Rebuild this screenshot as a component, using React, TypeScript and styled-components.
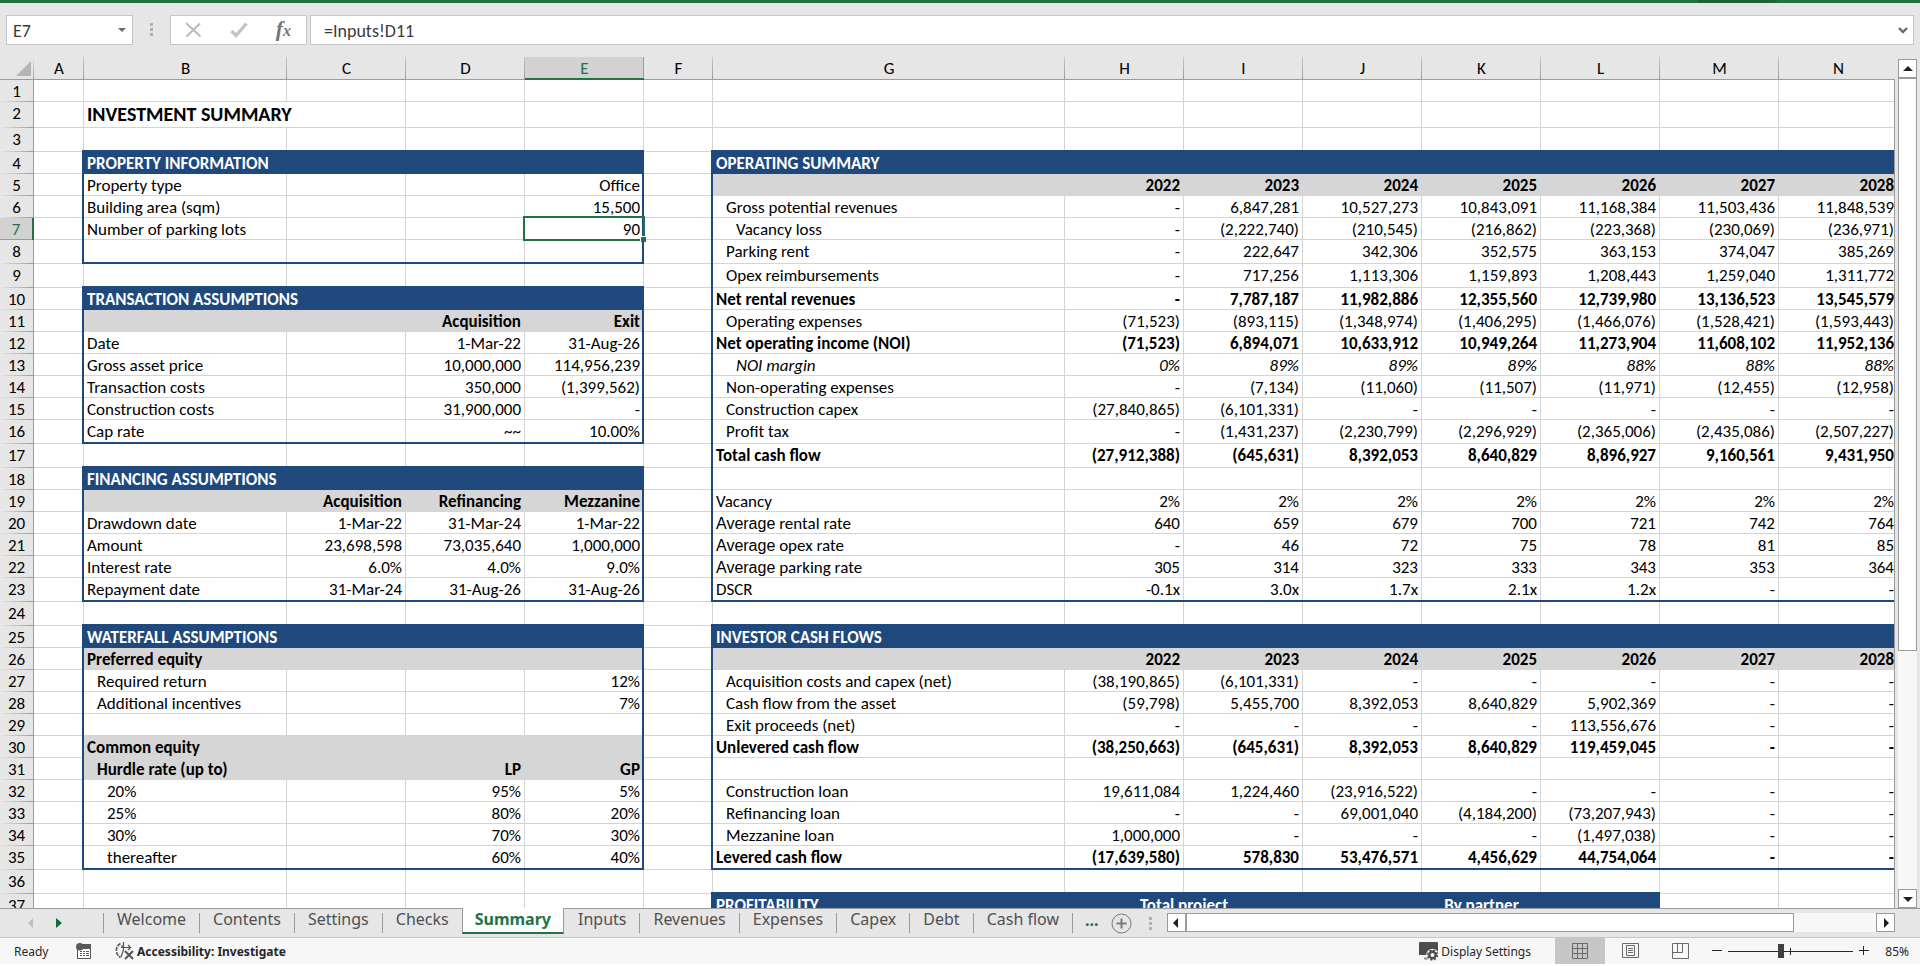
import React from 'react';
import styled, { createGlobalStyle, css } from 'styled-components';

const SHEET_FONT = '"Calibri", "Carlito", "Lato", sans-serif';
const UI_FONT = '"Segoe UI", "Noto Sans", "Open Sans", sans-serif';

const C = {
  green: '#217346',
  chrome: '#e6e6e6',
  navy: '#1f497d',
  band: '#d6d6d6',
  grid: '#d4d4d4',
  edge: '#9b9b9b',
  line: '#c6c6c6',
  status: '#f7f7f7',
};

const GlobalStyle = createGlobalStyle`
  *, *::before, *::after { box-sizing: border-box; }
  body { margin: 0; background: #fff; font-family: ${SHEET_FONT}; color: #000; }
  button, input { font: inherit; color: inherit; margin: 0; padding: 0; border: 0; background: none; }
`;

/* ---------- page ---------- */

const Page = styled.div`
  display: flex;
  flex-direction: column;
  height: 100vh;
  overflow: hidden;
  padding-bottom: 2px;
`;

const TitleEdge = styled.div`
  display: flex;
  justify-content: flex-end;
  height: 3px;
  flex: none;
  padding-right: 142px;
  background: ${C.green};
`;

const TitleShade = styled.span`
  width: 82px;
  background: #1e6038;
  clip-path: polygon(0 0, 100% 0, 96% 100%, 4% 100%);
`;

/* ---------- formula bar ---------- */

const FormulaBar = styled.div`
  display: flex;
  align-items: flex-start;
  flex: none;
  height: 54px;
  padding: 12px 6px;
  background: ${C.chrome};
  font-size: 18px;
  color: #3b3b3b;
`;

const BarBox = styled.div`
  display: flex;
  align-items: center;
  height: 30px;
  background: #fff;
  border: 1px solid ${C.line};
`;

const NameBox = styled(BarBox)`
  width: 127px;
  padding: 0 6px;
`;

const NameInput = styled.input`
  flex: 1;
  min-width: 0;
  padding-top: 2px;
  outline: none;
`;

const IconButton = styled.button`
  display: flex;
  align-items: center;
  justify-content: center;
  flex: none;
`;

const Dots = styled.span<{ $gapLeft: number; $gapRight: number }>`
  display: flex;
  flex-direction: column;
  justify-content: center;
  gap: 2px;
  height: 29px;
  margin: 0 ${p => p.$gapRight}px 0 ${p => p.$gapLeft}px;

  i {
    width: 3px;
    height: 3px;
    background: #b0b0b0;
  }
`;

const FormulaButtons = styled(BarBox)`
  justify-content: space-between;
  width: 137px;
  margin-right: 3px;
  padding: 0 15px 0 14px;
`;

const FxLabel = styled.span`
  font: italic 700 22px/26px "Liberation Serif", serif;
  color: #757575;

  small {
    font-size: 16px;
  }
`;

const FormulaField = styled(BarBox)`
  flex: 1;
  padding: 0 5px 0 13px;
`;

/* ---------- sheet ---------- */

const SheetArea = styled.main`
  display: flex;
  flex: 1;
  min-height: 0;
  background: ${C.chrome};
`;

const SheetPane = styled.div`
  flex: 1;
  min-width: 0;
  overflow: hidden;
  background: linear-gradient(${C.chrome} 23px, #fff 23px);
`;

const Table = styled.table`
  table-layout: fixed;
  width: 100%;
  min-width: 1898px;
  border-collapse: separate;
  border-spacing: 0;
  font-size: 17px;
  line-height: 18px;
`;

const Col = styled.col<{ $w?: number }>`
  ${p => p.$w && `width: ${p.$w}px;`}
`;

const Corner = styled.th`
  height: 23px;
  padding: 0;
  background: linear-gradient(${C.chrome}, ${C.edge}) right / 1px 100% no-repeat ${C.chrome};
  border-bottom: 1px solid ${C.edge};
`;

const CornerMark = styled.svg`
  display: block;
  margin: 0 3px 0 auto;
`;

const ColumnHead = styled.th<{ $on?: boolean }>`
  height: 23px;
  padding: 1px 0 0;
  font-weight: 400;
  background: linear-gradient(${C.line}, ${C.edge}) right / 1px 100% no-repeat ${C.chrome};
  border-bottom: 1px solid ${C.edge};

  &:last-child {
    background: ${C.chrome};
  }

  ${p => p.$on && css`
    padding-top: 2px;
    color: ${C.green};
    background: linear-gradient(${C.edge}, ${C.edge}) right / 1px 100% no-repeat #d2d2d2;
    border-bottom: 2px solid ${C.green};
  `}
`;

const RowHead = styled.th<{ $on?: boolean }>`
  padding: 3px 0 0;
  vertical-align: top;
  font-weight: 400;
  text-align: center;
  background: linear-gradient(90deg, ${C.chrome}, ${C.edge}) bottom / 100% 1px no-repeat ${C.chrome};
  border-right: 1px solid ${C.edge};

  ${p => p.$on && css`
    color: ${C.green};
    background: linear-gradient(${C.edge}, ${C.edge}) bottom / 100% 1px no-repeat #d2d2d2;
    border-right: 2px solid ${C.green};
  `}
`;

const Row = styled.tr<{ $h: number }>`
  height: ${p => p.$h}px;
`;

type Edge = 'grid' | 'navy' | 'band';

const layer = (color: string, place: string) => `linear-gradient(${color}, ${color}) ${place} no-repeat`;
const thickness = (e: Edge) => (e === 'navy' ? 2 : 1);

const Cell = styled.td<{
  $right: Edge;
  $bottom: Edge;
  $corner?: boolean;
  $band?: boolean;
  $bold?: boolean;
  $italic?: boolean;
  $indent?: number;
  $label?: boolean;
}>`
  position: relative;
  padding: 3px 4px 0 ${p => 3 + (p.$indent || 0) * 10}px;
  vertical-align: top;
  white-space: nowrap;
  text-align: ${p => (p.$label ? 'left' : 'right')};
  font-weight: ${p => (p.$bold ? 700 : 400)};
  font-style: ${p => (p.$italic ? 'italic' : 'normal')};
  background:
    ${p => p.$corner && `${layer(C.navy, 'right bottom / 2px 2px')},`}
    ${p => p.$right === 'navy' && `${layer(C.navy, 'right / 2px 100%')},`}
    ${p => layer(C[p.$bottom], `bottom / 100% ${thickness(p.$bottom)}px`)},
    ${p => layer(C[p.$right], `right / ${thickness(p.$right)}px 100%`)},
    ${p => (p.$band ? C.band : '#fff')};
`;

const BarCell = styled.th<{ $center?: boolean }>`
  padding: 3px 3px 0;
  vertical-align: top;
  text-align: ${p => (p.$center ? 'center' : 'left')};
  color: #fff;
  background: ${C.navy};
`;

const TitleCell = styled.td`
  padding: 1px 3px 0;
  vertical-align: top;
  font-size: 20px;
  line-height: 22px;
  font-weight: 700;
  border-right: 1px solid ${C.grid};
  border-bottom: 1px solid ${C.grid};
`;

const ArialWord = styled.span`
  font-family: Arial, "Liberation Sans", sans-serif;
  font-size: 16px;
`;

const Selection = styled.span`
  position: absolute;
  z-index: 1;
  inset: -2px -1px -1px -2px;
  border: 2px solid ${C.green};
  pointer-events: none;

  &::after {
    content: '';
    position: absolute;
    right: -3px;
    bottom: -3px;
    width: 6px;
    height: 6px;
    background: ${C.green};
    border: solid #fff;
    border-width: 1px 0 0 1px;
  }
`;

/* ---------- scroll bars ---------- */

const Gutter = styled.div`
  display: flex;
  flex: none;
  padding-right: 3px;
`;

const GutterLine = styled.div`
  width: 1px;
  margin: 22px 3px 0 0;
  background: ${C.edge};
`;

const VScroll = styled.div`
  display: flex;
  flex-direction: column;
  width: 19px;
  padding-top: 2px;
`;

const ScrollButton = styled(IconButton)`
  width: 19px;
  height: 19px;
  background: #fff;
  border: 1px solid ${C.edge};
`;

const Thumb = styled.div<{ $share: number }>`
  flex: ${p => p.$share};
  background: #fff;
  border: 1px solid ${C.edge};
`;

const Track = styled.div<{ $share: number }>`
  flex: ${p => p.$share};
  background: ${C.status};
`;

/* ---------- tab strip ---------- */

const TabStrip = styled.nav`
  display: flex;
  flex: none;
  height: 30px;
  padding-right: 25px;
  background: ${C.chrome};
  border-top: 1px solid ${C.edge};
  border-bottom: 1px solid ${C.line};
  font-family: ${UI_FONT};
  font-size: 16px;
  color: #505050;
`;

const TabArrows = styled.div`
  display: flex;
  gap: 23px;
  width: 103px;
  height: 28px;
  padding-left: 28px;
`;

const Tab = styled.button<{ $on?: boolean; $bare?: boolean }>`
  flex: none;
  height: 20px;
  margin-top: 4px;
  padding: 0 13px;
  line-height: 20px;
  border-left: 1px solid ${p => (p.$bare ? 'transparent' : C.edge)};

  span {
    display: block;
    margin-top: -8px;
  }

  ${p => p.$on && css`
    height: 26px;
    margin-top: -1px;
    padding: 0 12px 2px;
    font-weight: 700;
    color: ${C.green};
    background: #fff;
    border-right: 1px solid ${C.edge};
    border-bottom: 2px solid ${C.green};

    span { margin-top: 0; }
  `}
`;

const MoreTabs = styled.button`
  height: 22px;
  padding: 0 12px;
  font-weight: 700;
  line-height: 20px;
  color: ${C.green};
`;

const TabsEnd = styled.div`
  height: 20px;
  margin-top: 4px;
  border-left: 1px solid ${C.edge};
`;

const AddSheet = styled(IconButton)`
  height: 28px;
`;

const HScroll = styled.div`
  display: flex;
  flex: 1;
  height: 19px;
  margin-top: 4px;
`;

/* ---------- status bar ---------- */

const StatusBar = styled.footer`
  display: flex;
  align-items: center;
  flex: none;
  height: 26px;
  padding: 0 11px 0 14px;
  background: ${C.status};
  font-family: ${UI_FONT};
  font-size: 12px;
  color: #262626;
`;

const StatusText = styled.span<{ $w: number }>`
  min-width: ${p => p.$w}px;
`;

const StatusButton = styled(IconButton)<{ $bold?: boolean }>`
  gap: 2px;
  font-weight: ${p => (p.$bold ? 700 : 400)};
`;

const MacroButton = styled(StatusButton)`
  margin-right: 23px;
`;

const StatusRight = styled.div`
  display: flex;
  align-items: center;
  height: 100%;
  margin-left: auto;
`;

const ViewButton = styled(IconButton)<{ $on?: boolean }>`
  width: 50px;
  height: 100%;
  background: ${p => (p.$on ? '#c6c6c6' : 'transparent')};
`;

const ViewGroup = styled.div`
  display: flex;
  height: 100%;
  margin: 0 7px 0 24px;
`;

const ZoomSlider = styled.input`
  appearance: none;
  width: 125px;
  height: 14px;
  margin: 0 6px;
  background:
    linear-gradient(#262626, #262626) 62px 50% / 1px 7px no-repeat,
    linear-gradient(#262626, #262626) 0 50% / 100% 1px no-repeat;

  &::-webkit-slider-thumb {
    appearance: none;
    width: 6px;
    height: 14px;
    background: #404040;
  }
`;

const ZoomValue = styled.button`
  width: 40px;
  text-align: right;
`;

/* ---------- data ---------- */

type Kind = 'bar' | 'band' | 'body';
interface Block {
  k: Kind;
  t?: string;
  v?: string[];
  indent?: number;
  bold?: boolean;
  italic?: boolean;
  end?: boolean;
}
interface SheetRow { h: number; l?: Block; r?: Block }

const blanks = ['', '', '', '', '', '', ''];
const years = ['2022', '2023', '2024', '2025', '2026', '2027', '2028'];

const ROWS: SheetRow[] = [
  { h: 22 },
  { h: 26 },
  { h: 24 },
  { h: 22, l: { k: 'bar', t: 'PROPERTY INFORMATION' }, r: { k: 'bar', t: 'OPERATING SUMMARY' } },
  { h: 22, l: { k: 'body', t: 'Property type', v: ['', '', 'Office'] }, r: { k: 'band', v: years } },
  { h: 22, l: { k: 'body', t: 'Building area (sqm)', v: ['', '', '15,500'] }, r: { k: 'body', indent: 1, t: 'Gross potential revenues', v: ['-', '6,847,281', '10,527,273', '10,843,091', '11,168,384', '11,503,436', '11,848,539'] } },
  { h: 22, l: { k: 'body', t: 'Number of parking lots', v: ['', '', '90'] }, r: { k: 'body', indent: 2, t: 'Vacancy loss', v: ['-', '(2,222,740)', '(210,545)', '(216,862)', '(223,368)', '(230,069)', '(236,971)'] } },
  { h: 24, l: { k: 'body', end: true }, r: { k: 'body', indent: 1, t: 'Parking rent', v: ['-', '222,647', '342,306', '352,575', '363,153', '374,047', '385,269'] } },
  { h: 24, r: { k: 'body', indent: 1, t: 'Opex reimbursements', v: ['-', '717,256', '1,113,306', '1,159,893', '1,208,443', '1,259,040', '1,311,772'] } },
  { h: 22, l: { k: 'bar', t: 'TRANSACTION ASSUMPTIONS' }, r: { k: 'body', bold: true, t: 'Net rental revenues', v: ['-', '7,787,187', '11,982,886', '12,355,560', '12,739,980', '13,136,523', '13,545,579'] } },
  { h: 22, l: { k: 'band', v: ['', 'Acquisition', 'Exit'] }, r: { k: 'body', indent: 1, t: 'Operating expenses', v: ['(71,523)', '(893,115)', '(1,348,974)', '(1,406,295)', '(1,466,076)', '(1,528,421)', '(1,593,443)'] } },
  { h: 22, l: { k: 'body', t: 'Date', v: ['', '1-Mar-22', '31-Aug-26'] }, r: { k: 'body', bold: true, t: 'Net operating income (NOI)', v: ['(71,523)', '6,894,071', '10,633,912', '10,949,264', '11,273,904', '11,608,102', '11,952,136'] } },
  { h: 22, l: { k: 'body', t: 'Gross asset price', v: ['', '10,000,000', '114,956,239'] }, r: { k: 'body', indent: 2, italic: true, t: 'NOI margin', v: ['0%', '89%', '89%', '89%', '88%', '88%', '88%'] } },
  { h: 22, l: { k: 'body', t: 'Transaction costs', v: ['', '350,000', '(1,399,562)'] }, r: { k: 'body', indent: 1, t: 'Non-operating expenses', v: ['-', '(7,134)', '(11,060)', '(11,507)', '(11,971)', '(12,455)', '(12,958)'] } },
  { h: 22, l: { k: 'body', t: 'Construction costs', v: ['', '31,900,000', '-'] }, r: { k: 'body', indent: 1, t: 'Construction capex', v: ['(27,840,865)', '(6,101,331)', '-', '-', '-', '-', '-'] } },
  { h: 24, l: { k: 'body', end: true, t: 'Cap rate', v: ['', '~~', '10.00%'] }, r: { k: 'body', indent: 1, t: 'Profit tax', v: ['-', '(1,431,237)', '(2,230,799)', '(2,296,929)', '(2,365,006)', '(2,435,086)', '(2,507,227)'] } },
  { h: 24, r: { k: 'body', bold: true, t: 'Total cash flow', v: ['(27,912,388)', '(645,631)', '8,392,053', '8,640,829', '8,896,927', '9,160,561', '9,431,950'] } },
  { h: 22, l: { k: 'bar', t: 'FINANCING ASSUMPTIONS' }, r: { k: 'body' } },
  { h: 22, l: { k: 'band', v: ['Acquisition', 'Refinancing', 'Mezzanine'] }, r: { k: 'body', t: 'Vacancy', v: ['2%', '2%', '2%', '2%', '2%', '2%', '2%'] } },
  { h: 22, l: { k: 'body', t: 'Drawdown date', v: ['1-Mar-22', '31-Mar-24', '1-Mar-22'] }, r: { k: 'body', t: 'Average rental rate', v: ['640', '659', '679', '700', '721', '742', '764'] } },
  { h: 22, l: { k: 'body', t: 'Amount', v: ['23,698,598', '73,035,640', '1,000,000'] }, r: { k: 'body', t: 'Average opex rate', v: ['-', '46', '72', '75', '78', '81', '85'] } },
  { h: 22, l: { k: 'body', t: 'Interest rate', v: ['6.0%', '4.0%', '9.0%'] }, r: { k: 'body', t: 'Average parking rate', v: ['305', '314', '323', '333', '343', '353', '364'] } },
  { h: 24, l: { k: 'body', end: true, t: 'Repayment date', v: ['31-Mar-24', '31-Aug-26', '31-Aug-26'] }, r: { k: 'body', end: true, t: 'DSCR', v: ['-0.1x', '3.0x', '1.7x', '2.1x', '1.2x', '-', '-'] } },
  { h: 24 },
  { h: 22, l: { k: 'bar', t: 'WATERFALL ASSUMPTIONS' }, r: { k: 'bar', t: 'INVESTOR CASH FLOWS' } },
  { h: 22, l: { k: 'band', t: 'Preferred equity' }, r: { k: 'band', v: years } },
  { h: 22, l: { k: 'body', indent: 1, t: 'Required return', v: ['', '', '12%'] }, r: { k: 'body', indent: 1, t: 'Acquisition costs and capex (net)', v: ['(38,190,865)', '(6,101,331)', '-', '-', '-', '-', '-'] } },
  { h: 22, l: { k: 'body', indent: 1, t: 'Additional incentives', v: ['', '', '7%'] }, r: { k: 'body', indent: 1, t: 'Cash flow from the asset', v: ['(59,798)', '5,455,700', '8,392,053', '8,640,829', '5,902,369', '-', '-'] } },
  { h: 22, l: { k: 'body' }, r: { k: 'body', indent: 1, t: 'Exit proceeds (net)', v: ['-', '-', '-', '-', '113,556,676', '-', '-'] } },
  { h: 22, l: { k: 'band', t: 'Common equity' }, r: { k: 'body', bold: true, t: 'Unlevered cash flow', v: ['(38,250,663)', '(645,631)', '8,392,053', '8,640,829', '119,459,045', '-', '-'] } },
  { h: 22, l: { k: 'band', indent: 1, t: 'Hurdle rate (up to)', v: ['', 'LP', 'GP'] }, r: { k: 'body' } },
  { h: 22, l: { k: 'body', indent: 2, t: '20%', v: ['', '95%', '5%'] }, r: { k: 'body', indent: 1, t: 'Construction loan', v: ['19,611,084', '1,224,460', '(23,916,522)', '-', '-', '-', '-'] } },
  { h: 22, l: { k: 'body', indent: 2, t: '25%', v: ['', '80%', '20%'] }, r: { k: 'body', indent: 1, t: 'Refinancing loan', v: ['-', '-', '69,001,040', '(4,184,200)', '(73,207,943)', '-', '-'] } },
  { h: 22, l: { k: 'body', indent: 2, t: '30%', v: ['', '70%', '30%'] }, r: { k: 'body', indent: 1, t: 'Mezzanine loan', v: ['1,000,000', '-', '-', '-', '(1,497,038)', '-', '-'] } },
  { h: 24, l: { k: 'body', end: true, indent: 2, t: 'thereafter', v: ['', '60%', '40%'] }, r: { k: 'body', end: true, bold: true, t: 'Levered cash flow', v: ['(17,639,580)', '578,830', '53,476,571', '4,456,629', '44,754,064', '-', '-'] } },
  { h: 24 },
  { h: 22, r: { k: 'bar', t: 'PROFITABILITY' } },
];

const COLUMNS: [string, number | undefined][] = [
  ['A', 50], ['B', 203], ['C', 119], ['D', 119], ['E', 119], ['F', 69], ['G', 352],
  ['H', 119], ['I', 119], ['J', 119], ['K', 119], ['L', 119], ['M', 119], ['N', undefined],
];

const TABS = ['Welcome', 'Contents', 'Settings', 'Checks', 'Summary', 'Inputs', 'Revenues', 'Expenses', 'Capex', 'Debt', 'Cash flow'];

const SELECTED_ROW = 7;

/* ---------- sheet pieces ---------- */

function labelText(t?: string) {
  if (t && t.startsWith('Average ')) return <><ArialWord>Average</ArialWord>{t.slice(7)}</>;
  return t;
}

interface BlockProps { block?: Block; next?: Block; count: number; closed: boolean; selected?: boolean }

function BlockCells({ block, next, count, closed, selected }: BlockProps) {
  if (block?.k === 'bar') return <BarCell colSpan={count + 1} scope="colgroup">{block.t}</BarCell>;
  const band = block?.k === 'band';
  const bottom: Edge = block?.end || next?.k === 'bar' ? 'navy' : band ? 'band' : 'grid';
  const inner: Edge = band ? 'band' : 'grid';
  const values = block?.v ?? blanks;
  return (
    <>
      <Cell $label $right={inner} $bottom={bottom} $band={band} $bold={band || block?.bold} $italic={block?.italic} $indent={block?.indent}>
        {labelText(block?.t)}
      </Cell>
      {values.slice(0, count).map((v, i) => {
        const last = i === count - 1;
        return (
          <Cell key={i} $right={last && closed && block ? 'navy' : inner} $bottom={bottom} $band={band} $bold={band || block?.bold} $italic={block?.italic}>
            {v}
            {selected && last && <Selection />}
          </Cell>
        );
      })}
    </>
  );
}

function Sheet() {
  return (
    <Table>
      <colgroup>
        <Col $w={34} />
        {COLUMNS.map(([n, w]) => <Col key={n} $w={w} />)}
      </colgroup>
      <thead>
        <tr>
          <Corner aria-label="Select all">
            <CornerMark width="15" height="15" viewBox="0 0 15 15"><path d="M15 0V15H0z" fill="#b4b4b4" /></CornerMark>
          </Corner>
          {COLUMNS.map(([n]) => <ColumnHead key={n} scope="col" $on={n === 'E'}>{n}</ColumnHead>)}
        </tr>
      </thead>
      <tbody>
        {ROWS.map((row, i) => {
          const n = i + 1;
          const next = ROWS[i + 1];
          return (
            <Row key={n} $h={row.h}>
              <RowHead scope="row" $on={n === SELECTED_ROW}>{n}</RowHead>
              <Cell $right={row.l ? 'navy' : 'grid'} $bottom="grid" $corner={next?.l?.k === 'bar'} />
              {n === 2 ? (
                <>
                  <TitleCell colSpan={2}>INVESTMENT SUMMARY</TitleCell>
                  <Cell $right="grid" $bottom="grid" />
                  <Cell $right="grid" $bottom="grid" />
                </>
              ) : (
                <BlockCells block={row.l} next={next?.l} count={3} closed selected={n === SELECTED_ROW} />
              )}
              <Cell $right={row.r ? 'navy' : 'grid'} $bottom="grid" $corner={next?.r?.k === 'bar'} />
              {n === 37 ? (
                <>
                  <BarCell>PROFITABILITY</BarCell>
                  <BarCell $center colSpan={2}>Total project</BarCell>
                  <BarCell $center colSpan={3}>By partner</BarCell>
                  <Cell $right="grid" $bottom="grid" />
                  <Cell $right="grid" $bottom="grid" />
                </>
              ) : n === 36 ? (
                <>
                  {COLUMNS.slice(6).map(([name], c) => <Cell key={name} $right="grid" $bottom={c < 6 ? 'navy' : 'grid'} />)}
                </>
              ) : (
                <BlockCells block={row.r} next={next?.r} count={7} closed={false} />
              )}
            </Row>
          );
        })}
      </tbody>
    </Table>
  );
}

/* ---------- icons ---------- */

const Arrow = ({ dir, color = '#1f1f1f' }: { dir: 'up' | 'down' | 'left' | 'right'; color?: string }) => {
  const d = { up: 'M0 7L5 2L10 7z', down: 'M0 3H10L5 8z', left: 'M7 0V10L2 5z', right: 'M3 0L8 5L3 10z' }[dir];
  return <svg width="10" height="10" viewBox="0 0 10 10"><path d={d} fill={color} /></svg>;
};

const MacroIcon = () => (
  <svg width="16" height="16" viewBox="0 0 16 16">
    <rect x="1.5" y="3.5" width="13" height="12" fill="#fff" stroke="#5a5a5a" />
    <rect x="6" y="1" width="9" height="5" fill="#5a5a5a" />
    <circle cx="3.8" cy="3.8" r="3.8" fill="#5a5a5a" />
    <path d="M4 8.5h2M7 8.5h2M10 8.5h3M4 10.5h2M7 10.5h2M10 10.5h3M4 12.5h2M7 12.5h2M10 12.5h3" stroke="#5a5a5a" />
  </svg>
);

const AccessIcon = () => (
  <svg width="20" height="18" viewBox="0 0 20 18" fill="none" stroke="#555">
    <path d="M5.5 1.5A8 8 0 0 0 5.5 15.5" strokeWidth="1.6" strokeDasharray="4 1" />
    <path d="M6 5.5h9M8.500 0v8M6.500 3.500L8.500 5.500M13 3l2.500 2.500L13 8M8.500 8L6 15" strokeWidth="1.2" />
    <path d="M10 9l8 8M18 9l-8 8" strokeWidth="2" />
  </svg>
);

const DisplayIcon = () => (
  <svg width="20" height="19" viewBox="0 0 20 19">
    <path d="M1 0H18Q19 0 19 1V13H0V1Q0 0 1 0z" fill="#4d4d4d" />
    <path d="M5 16.5H11" stroke="#8a8a8a" strokeWidth="2" />
    <circle cx="13.5" cy="13" r="6.2" fill={C.status} />
    <circle cx="13.5" cy="13" r="3.2" fill="none" stroke="#4d4d4d" strokeWidth="2.4" />
    <circle cx="13.5" cy="13" r="4.8" fill="none" stroke="#4d4d4d" strokeWidth="1.6" strokeDasharray="2.1 1.67" />
  </svg>
);

const NormalViewIcon = () => (
  <svg width="16" height="16" viewBox="0 0 16 16" fill="none" stroke="#6a6a6a">
    <path d="M.5 .5h15v15H.5zM5.5 .5v15M10.5 .5v15M.5 5.5h15M.5 10.5h15" />
  </svg>
);

const LayoutViewIcon = () => (
  <svg width="17" height="16" viewBox="0 0 17 16" fill="none" stroke="#6a6a6a">
    <path d="M.5 .5h16v14H.5zM4.5 2.5h8v10h-8zM6 5.5h5M6 7.5h5M6 9.5h5" />
  </svg>
);

const BreakViewIcon = () => (
  <svg width="17" height="16" viewBox="0 0 17 16" fill="none" stroke="#6a6a6a">
    <path d="M.5 .5h16v15H.5zM.5 9.5h10M5.5 .5v9M10.5 .5v9" />
  </svg>
);

const Minus = () => <svg width="10" height="11" viewBox="0 0 10 11"><path d="M0 4.5H10" stroke="#262626" /></svg>;
const Plus = () => <svg width="10" height="11" viewBox="0 0 10 11"><path d="M0 4.5H10M4.5 0V9" stroke="#262626" /></svg>;

/* ---------- app ---------- */

export default function App() {
  return (
    <Page>
      <GlobalStyle />
      <TitleEdge><TitleShade /></TitleEdge>

      <FormulaBar>
        <NameBox>
          <NameInput aria-label="Name box" defaultValue="E7" />
          <IconButton aria-label="Open name list">
            <svg width="8" height="5" viewBox="0 0 8 5"><path d="M0 0H8L4 4z" fill="#6a6a6a" /></svg>
          </IconButton>
        </NameBox>
        <Dots $gapLeft={17} $gapRight={17}><i /><i /><i /></Dots>
        <FormulaButtons>
          <IconButton aria-label="Cancel">
            <svg width="17" height="16" viewBox="0 0 17 16"><path d="M1 1L15.5 14.5M15 1.5L1.5 14.5" stroke="#bdbdbd" strokeWidth="2.2" fill="none" /></svg>
          </IconButton>
          <IconButton aria-label="Enter">
            <svg width="18" height="16" viewBox="0 0 18 16"><path d="M1.5 9L6 13.5L16.5 1.5" stroke="#c4c4c4" strokeWidth="3.4" fill="none" /></svg>
          </IconButton>
          <IconButton aria-label="Insert function"><FxLabel>f<small>x</small></FxLabel></IconButton>
        </FormulaButtons>
        <FormulaField>
          <NameInput aria-label="Formula" defaultValue="=Inputs!D11" />
          <IconButton aria-label="Expand formula bar">
            <svg width="10" height="7" viewBox="0 0 10 7"><path d="M1 1L5 5L9 1" stroke="#6a6a6a" strokeWidth="2.4" fill="none" /></svg>
          </IconButton>
        </FormulaField>
      </FormulaBar>

      <SheetArea>
        <SheetPane><Sheet /></SheetPane>
        <Gutter>
          <GutterLine />
          <VScroll>
            <ScrollButton aria-label="Scroll up"><Arrow dir="up" /></ScrollButton>
            <Thumb $share={573} />
            <Track $share={239} />
            <ScrollButton aria-label="Scroll down"><Arrow dir="down" /></ScrollButton>
          </VScroll>
        </Gutter>
      </SheetArea>

      <TabStrip aria-label="Sheets">
        <TabArrows>
          <IconButton aria-label="Previous sheets">
            <svg width="5" height="10" viewBox="0 0 5 10"><path d="M5 0V10L0 5z" fill="#bdbdbd" /></svg>
          </IconButton>
          <IconButton aria-label="Next sheets">
            <svg width="6" height="10" viewBox="0 0 6 10"><path d="M0 0V10L6 5z" fill="#0e6b37" /></svg>
          </IconButton>
        </TabArrows>
        {TABS.map((t, i) => (
          <Tab key={t} $on={t === 'Summary'} $bare={TABS[i - 1] === 'Summary'}><span>{t}</span></Tab>
        ))}
        <TabsEnd />
        <MoreTabs aria-label="More sheets">...</MoreTabs>
        <AddSheet aria-label="New sheet">
          <svg width="21" height="21" viewBox="0 0 21 21" fill="none" stroke="#7a7a7a">
            <circle cx="10.5" cy="10.5" r="9.5" />
            <path d="M5.5 10.5h10M10.5 5.5v10" strokeWidth="2" />
          </svg>
        </AddSheet>
        <Dots $gapLeft={17} $gapRight={15}><i /><i /><i /></Dots>
        <HScroll>
          <ScrollButton aria-label="Scroll left"><Arrow dir="left" /></ScrollButton>
          <Thumb $share={608} />
          <Track $share={82} />
          <ScrollButton aria-label="Scroll right"><Arrow dir="right" /></ScrollButton>
        </HScroll>
      </TabStrip>

      <StatusBar>
        <StatusText $w={62}>Ready</StatusText>
        <MacroButton aria-label="Record macro"><MacroIcon /></MacroButton>
        <StatusButton $bold><AccessIcon />Accessibility: Investigate</StatusButton>
        <StatusRight>
          <StatusButton><DisplayIcon />Display Settings</StatusButton>
          <ViewGroup>
            <ViewButton $on aria-label="Normal view"><NormalViewIcon /></ViewButton>
            <ViewButton aria-label="Page layout view"><LayoutViewIcon /></ViewButton>
            <ViewButton aria-label="Page break preview"><BreakViewIcon /></ViewButton>
          </ViewGroup>
          <IconButton aria-label="Zoom out"><Minus /></IconButton>
          <ZoomSlider type="range" aria-label="Zoom" min={0} max={100} defaultValue={42} />
          <IconButton aria-label="Zoom in"><Plus /></IconButton>
          <ZoomValue>85%</ZoomValue>
        </StatusRight>
      </StatusBar>
    </Page>
  );
}
